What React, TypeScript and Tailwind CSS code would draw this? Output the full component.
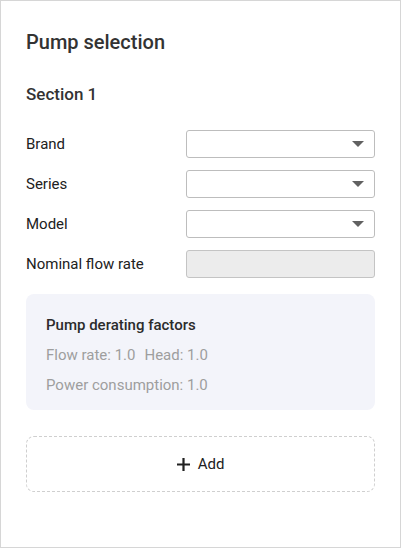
import { ReactNode } from "react";

type FieldRowProps = {
    label: string;
    children: ReactNode;
};

const FieldRow = ({ label, children }: FieldRowProps) => (
    <div className="flex items-center h-7">
        <div className="w-[160px] text-[15px] text-[#212121]">{label}</div>
        <div className="flex-1">{children}</div>
    </div>
);

const SelectBox = () => (
    <button
        type="button"
        className="flex items-center justify-end w-full h-7 px-[10px] bg-white border border-[#bdbdbd] rounded-[3px]"
    >
        <svg width="12" height="6" viewBox="0 0 12 6">
            <path d="M0 0h12L6 6z" fill="#616161" />
        </svg>
    </button>
);

const App = () => {
    return (
        <div
            className="w-[401px] h-[548px] bg-white border border-[#d6d6d6] px-[25px] pt-[29px]"
            style={{ fontFamily: "Roboto, 'Noto Sans', sans-serif" }}
        >
            <h1 className="text-xl leading-6 font-medium text-[#333]">
                Pump selection
            </h1>
            <h2 className="mt-7 text-[17px] leading-6 font-medium text-[#333]">
                Section 1
            </h2>
            <div className="mt-6 flex flex-col gap-3">
                <FieldRow label="Brand">
                    <SelectBox />
                </FieldRow>
                <FieldRow label="Series">
                    <SelectBox />
                </FieldRow>
                <FieldRow label="Model">
                    <SelectBox />
                </FieldRow>
                <FieldRow label="Nominal flow rate">
                    <div className="w-full h-7 bg-[#ececec] border border-[#c4c4c4] rounded-[3px]"></div>
                </FieldRow>
            </div>
            <div className="mt-4 h-[116px] px-5 pt-4 bg-[#f3f4fa] rounded-lg">
                <div className="text-[15px] leading-[30px] font-medium text-[#2b2b2b]">
                    Pump derating factors
                </div>
                <div className="flex text-[15px] leading-[30px] text-[#9e9e9e]">
                    <span>Flow rate: 1.0</span>
                    <span className="ml-[9px]">Head: 1.0</span>
                </div>
                <div className="text-[15px] leading-[30px] text-[#9e9e9e]">
                    Power consumption: 1.0
                </div>
            </div>
            <button
                type="button"
                className="mt-[26px] flex items-center justify-center gap-2 w-full h-14 border border-dashed border-[#cfcfcf] rounded-lg text-[15px] text-[#212121]"
            >
                <svg width="13" height="13" viewBox="0 0 13 13">
                    <path d="M6.5 0v13M0 6.5h13" stroke="#212121" strokeWidth="2.2" />
                </svg>
                Add
            </button>
        </div>
    );
};

export default App;
